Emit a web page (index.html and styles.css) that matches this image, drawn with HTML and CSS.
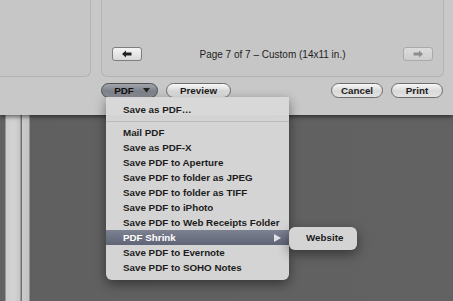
FILE: index.html
```html
<!DOCTYPE html>
<html lang="en">
<head>
    <meta charset="UTF-8">
    <title>Print</title>
    <link rel="stylesheet" href="styles.css">
</head>
<body>
    <div class="sheet">
        <div class="panels">
            <div class="panel side"></div>
            <div class="panel preview">
                <div class="pager">
                    <div class="nav">
                        <svg width="12" height="8" viewBox="0 0 12 8"><path d="M1 4 L5 0.5 L5 2.5 L10.5 2.5 L10.5 5.5 L5 5.5 L5 7.5 Z" fill="#222"/></svg>
                    </div>
                    <div class="page-label">Page 7 of 7 – Custom (14x11 in.)</div>
                    <div class="nav off">
                        <svg width="12" height="8" viewBox="0 0 12 8"><path d="M11 4 L7 0.5 L7 2.5 L1.5 2.5 L1.5 5.5 L7 5.5 L7 7.5 Z" fill="#8e8e8e"/></svg>
                    </div>
                </div>
            </div>
        </div>
        <div class="actions">
            <div class="pill pdf">PDF
                <svg width="7" height="5" viewBox="0 0 7 5"><path d="M0 0 L7 0 L3.5 4.5 Z" fill="#222"/></svg>
            </div>
            <div class="pill">Preview</div>
            <div class="spacer"></div>
            <div class="pill wide">Cancel</div>
            <div class="pill wide">Print</div>
        </div>
    </div>
    <div class="desk"></div>

    <div class="menu">
        <div class="item">Save as PDF…</div>
        <div class="sep"></div>
        <div class="item">Mail PDF</div>
        <div class="item">Save as PDF-X</div>
        <div class="item">Save PDF to Aperture</div>
        <div class="item">Save PDF to folder as JPEG</div>
        <div class="item">Save PDF to folder as TIFF</div>
        <div class="item">Save PDF to iPhoto</div>
        <div class="item">Save PDF to Web Receipts Folder</div>
        <div class="item hot">PDF Shrink
            <svg class="arrow" width="7" height="8" viewBox="0 0 7 8"><path d="M0 0 L7 4 L0 8 Z" fill="#dfe1e6"/></svg>
        </div>
        <div class="item">Save PDF to Evernote</div>
        <div class="item">Save PDF to SOHO Notes</div>
    </div>
    <div class="menu sub">
        <div class="item">Website</div>
    </div>
</body>
</html>
```

FILE: styles.css
```css
body {
    margin: 0;
    width: 453px;
    height: 301px;
    overflow: hidden;
    background-color: #626262;
    font-family: "Liberation Sans", Arial, sans-serif;
    color: #1c1c1c;
    position: relative;
}
.sheet {
    height: 115px;
    background-color: #c8c8c8;
    display: flex;
    flex-direction: column;
    box-shadow: 0 2px 4px rgba(0,0,0,0.5);
    position: relative;
    z-index: 1;
}
.panels {
    display: flex;
    gap: 10px;
    height: 77px;
}
.panel {
    background-color: #c6c6c6;
    border: 1px solid #b3b3b3;
    border-top: none;
    box-sizing: border-box;
}
.side {
    width: 91px;
    border-left: none;
    border-bottom-right-radius: 6px;
}
.preview {
    width: 343px;
    border-bottom-left-radius: 6px;
    border-bottom-right-radius: 6px;
    display: flex;
    align-items: flex-end;
}
.pager {
    display: flex;
    align-items: center;
    justify-content: space-between;
    width: 100%;
    padding: 0 10px 15px 10px;
}
.nav {
    width: 30px;
    height: 14px;
    box-sizing: border-box;
    border: 1px solid #7e7e7e;
    border-radius: 3px;
    background: linear-gradient(#f4f4f4, #d9d9d9);
    display: flex;
    align-items: center;
    justify-content: center;
}
.nav.off {
    border-color: #a9a9a9;
    background: linear-gradient(#dcdcdc, #cdcdcd);
}
.page-label {
    font-size: 10px;
    color: #1e1e1e;
}
.actions {
    display: flex;
    align-items: center;
    gap: 8px;
    padding: 6px 10px 0 101px;
}
.spacer {
    flex: 1;
}
.pill {
    height: 15px;
    box-sizing: border-box;
    border: 1px solid #6c6c6c;
    border-radius: 8px;
    background: linear-gradient(#f8f8f8, #d8d8d8 55%, #e4e4e4);
    font-size: 9.8px;
    font-weight: bold;
    display: flex;
    align-items: center;
    justify-content: center;
    padding: 0 13px;
}
.pdf {
    width: 57px;
    padding: 0 0 0 5px;
    background: linear-gradient(#a2a5ab, #7d8189 55%, #8e9198);
    border-color: #4d4f55;
    color: #111;
    gap: 9px;
}
.wide {
    width: 52px;
    padding: 0;
}
.desk {
    height: 186px;
    background: linear-gradient(90deg,
        #626262 0, #626262 5px,
        #cdcdcd 6px, #d3d3d3 14px, #c6c6c6 20px,
        #6f6f6f 21px, #6f6f6f 22px,
        #cbcbcb 22px, #c4c4c4 29px,
        #606060 30px, #626262 100%);
}
.menu {
    position: absolute;
    left: 106px;
    top: 97px;
    width: 183px;
    box-sizing: border-box;
    padding: 5px 0;
    background-color: rgba(216,216,216,0.97);
    border-radius: 0 0 6px 6px;
    box-shadow: 0 4px 12px rgba(0,0,0,0.45);
    z-index: 2;
}
.item {
    height: 15px;
    line-height: 15px;
    padding-left: 17px;
    font-size: 9.8px;
    font-weight: bold;
    white-space: nowrap;
    position: relative;
}
.sep {
    height: 1px;
    background-color: #b9b9b9;
    margin: 4px 0 3px 0;
}
.hot {
    background: linear-gradient(#7c8291, #5f6576);
    color: #fff;
}
.arrow {
    position: absolute;
    right: 8px;
    top: 4px;
}
.sub {
    left: 289px;
    top: 227px;
    width: 68px;
    padding: 3px 0 5px 0;
    border-radius: 6px;
}
```
